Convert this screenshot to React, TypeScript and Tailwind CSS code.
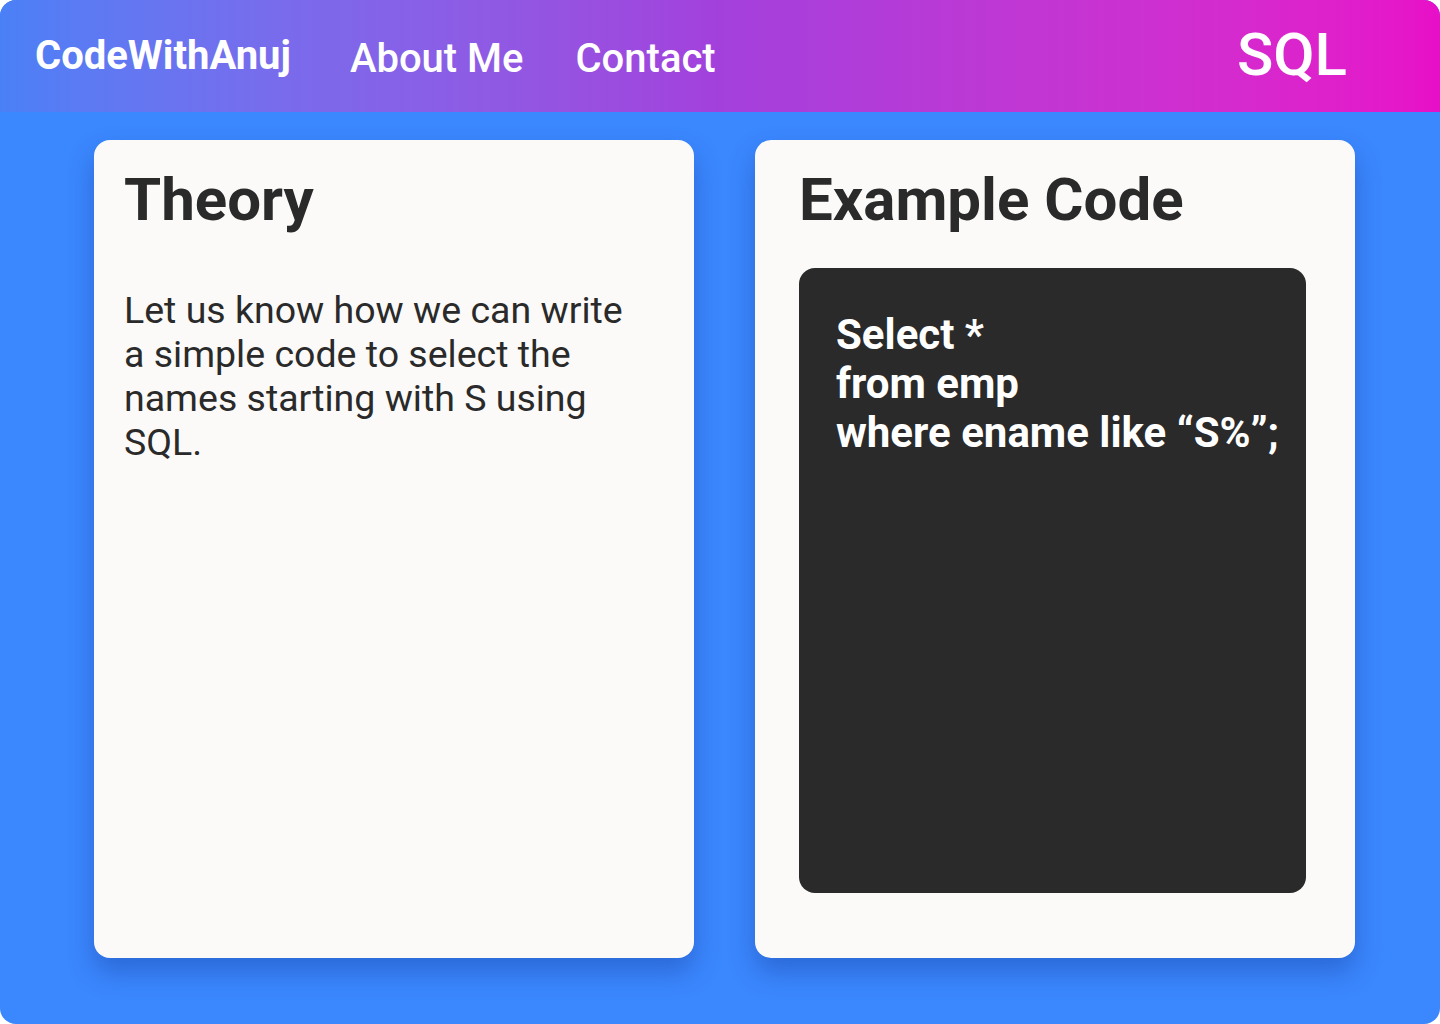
import React from 'react';

const App: React.FC = () => {
  return (
    <div className="w-[1440px] h-[1024px] bg-white font-['Roboto',sans-serif]">
      <div className="w-full h-full rounded-[16px] overflow-hidden bg-[#3b87fd] flex flex-col">
        <header className="h-[112px] shrink-0 flex items-center px-[35px] bg-gradient-to-r from-[#4a80f6] via-[#a340dc] to-[#e80fc8] text-white">
          <span className="text-[40px] font-bold">CodeWithAnuj</span>
          <nav className="flex items-center gap-[52px] ml-[59px] pt-[5px]">
            <a className="text-[40px] font-medium">About Me</a>
            <a className="text-[40px] font-medium">Contact</a>
          </nav>
          <span className="ml-auto mr-[58px] text-[60px] font-medium pb-[3px]">SQL</span>
        </header>

        <main className="flex gap-[61px] px-[94px] pt-[28px]">
          <section className="w-[600px] h-[818px] shrink-0 rounded-[16px] bg-[#fbfaf8] shadow-[0_14px_26px_rgba(20,60,160,0.4)] px-[30px] pt-[22px]">
            <h2 className="text-[60px] font-bold text-[#2a2a2a] leading-[76px]">Theory</h2>
            <p className="mt-[50px] w-[510px] text-[37.5px] text-[#2a2a2a] leading-[44px]">
              Let us know how we can write a simple code to select the names starting with S using SQL.
            </p>
          </section>

          <section className="w-[600px] h-[818px] shrink-0 rounded-[16px] bg-[#fbfaf8] shadow-[0_14px_26px_rgba(20,60,160,0.4)] px-[44px] pt-[22px]">
            <h2 className="text-[60px] font-bold text-[#2a2a2a] leading-[76px]">Example Code</h2>
            <div className="mt-[30px] w-[507px] h-[625px] rounded-[16px] bg-[#2a2a2a] px-[37px] pt-[42px]">
              <pre className="font-['Roboto',sans-serif] text-[42px] font-bold text-white leading-[49px] whitespace-pre">
{`Select *
from emp
where ename like “S%”;`}
              </pre>
            </div>
          </section>
        </main>
      </div>
    </div>
  );
};

export default App;
